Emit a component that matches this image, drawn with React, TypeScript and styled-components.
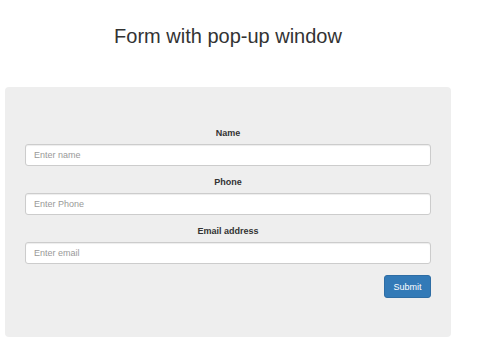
import React from "react";
import styled, { createGlobalStyle } from "styled-components";

const Global = createGlobalStyle`
  body { margin: 0; background: #fff; font-family: "Liberation Sans", Arial, sans-serif; color: #333; }
  * { box-sizing: border-box; }
`;

const Page = styled.div`
  width: 446px;
  margin-left: 5px;
`;

const Title = styled.h1`
  margin: 0;
  padding-top: 24px;
  height: 87px;
  text-align: center;
  font-weight: normal;
  font-size: 20px;
  line-height: 24px;
  color: #333;
`;

const Panel = styled.form`
  background: #eeeeee;
  border-radius: 4px;
  height: 250px;
  padding: 39px 20px 0;
  display: flex;
  flex-direction: column;
`;

const Group = styled.div`
  display: flex;
  flex-direction: column;
  margin-bottom: 9px;
`;

const Label = styled.label`
  display: block;
  text-align: center;
  font-weight: bold;
  font-size: 9px;
  line-height: 12px;
  height: 12px;
  margin-top: 1px;
  margin-bottom: 5px;
  color: #333;
`;

const Input = styled.input`
  height: 22px;
  width: 100%;
  border: 1px solid #ccc;
  border-radius: 3px;
  background: #fff;
  padding: 0 8px;
  font-family: "Liberation Sans", Arial, sans-serif;
  font-size: 9px;
  color: #555;
  box-shadow: inset 0 1px 1px rgba(0, 0, 0, 0.075);
  &::placeholder { color: #999; }
`;

const Actions = styled.div`
  display: flex;
  justify-content: flex-end;
  margin-top: 2px;
`;

const Button = styled.button`
  width: 47px;
  height: 23px;
  background: #337ab7;
  border: 1px solid #2e6da4;
  border-radius: 3px;
  color: #fff;
  font-family: "Liberation Sans", Arial, sans-serif;
  font-size: 9px;
  padding: 0;
`;

const fields = [
  { label: "Name", placeholder: "Enter name", type: "text" },
  { label: "Phone", placeholder: "Enter Phone", type: "tel" },
  { label: "Email address", placeholder: "Enter email", type: "email" },
];

export default function App() {
  return (
    <>
      <Global />
      <Page>
        <Title>Form with pop-up window</Title>
        <Panel onSubmit={(e) => e.preventDefault()}>
          {fields.map((f) => (
            <Group key={f.label}>
              <Label>{f.label}</Label>
              <Input type={f.type} placeholder={f.placeholder} />
            </Group>
          ))}
          <Actions>
            <Button type="submit">Submit</Button>
          </Actions>
        </Panel>
      </Page>
    </>
  );
}
